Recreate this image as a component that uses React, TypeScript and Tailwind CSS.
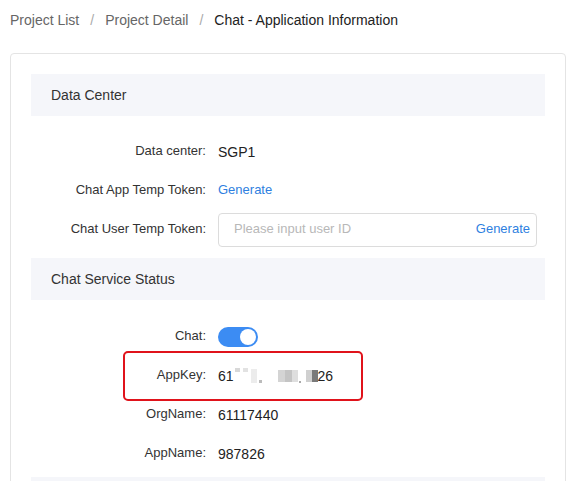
import { useState } from 'react'

const Row = ({ label, children }: { label: string; children: React.ReactNode }) => {
  return (
    <div className="h-[39px] flex items-center">
      <span className="w-[175px] text-right text-[13px] text-[#333]">{label}</span>
      <div className="ml-[12px] flex-1 flex items-center">{children}</div>
    </div>
  )
}

const SectionHeader = ({ title }: { title: string }) => {
  return (
    <div className="h-[42px] bg-[#f5f6fa] pl-5 flex items-center text-[#333]">
      {title}
    </div>
  )
}

const App = () => {
  const [chatOn, setChatOn] = useState(true)
  const [userId, setUserId] = useState('')

  return (
    <div
      className="w-[568px] h-[481px] overflow-hidden bg-white text-sm"
      style={{ fontFamily: '"Liberation Sans", Arial, sans-serif' }}
    >
      <div className="pt-[10px] pl-[10px] h-[30px] flex items-center leading-5">
        <span className="text-[#666]">Project List</span>
        <span className="mx-[11px] text-[#aaa]">/</span>
        <span className="text-[#666]">Project Detail</span>
        <span className="mx-[11px] text-[#aaa]">/</span>
        <span className="text-[#222]">Chat - Application Information</span>
      </div>

      <div className="ml-[10px] mt-[23px] w-[556px] border border-[#e4e4e4] rounded-[4px] pt-5 px-5 pb-10">
        <SectionHeader title="Data Center" />
        <div className="mt-[16px]">
          <Row label="Data center:">
            <span className="text-[#222]">SGP1</span>
          </Row>
          <Row label="Chat App Temp Token:">
            <span className="text-[13px] text-[#2f7fe0] cursor-pointer">Generate</span>
          </Row>
          <Row label="Chat User Temp Token:">
            <div className="w-[319px] h-[34px] border border-[#dcdcdc] rounded-[4px] flex items-center pl-[15px] pr-[6px]">
              <input
                className="flex-1 bg-transparent focus:outline-none text-[13px] placeholder:text-[#b8b8b8]"
                placeholder="Please input user ID"
                value={userId}
                onChange={(e) => setUserId(e.target.value)}
              />
              <span className="text-[13px] text-[#2f7fe0] cursor-pointer">Generate</span>
            </div>
          </Row>
        </div>

        <div className="mt-[9px]">
          <SectionHeader title="Chat Service Status" />
        </div>
        <div className="mt-[17px]">
          <Row label="Chat:">
            <button
              onClick={() => setChatOn(!chatOn)}
              className={`w-10 h-5 rounded-full flex items-center px-[2px] ${
                chatOn ? 'bg-[#3c8cf3] justify-end' : 'bg-[#ccc] justify-start'
              }`}
            >
              <span className="w-4 h-4 rounded-full bg-white" />
            </button>
          </Row>
          <div className="relative">
            <Row label="AppKey:">
              <span className="text-[#222] flex items-center">
                61
                <span className="ml-[1px] w-[5px] h-[4px] bg-[#d8d8d8] self-start mt-[2px]" />
                <span className="ml-[3px] w-[5px] h-[4px] bg-[#e2e2e2] self-start mt-[2px]" />
                <span className="ml-[3px] w-[6px] h-[14px] bg-[#ececec]" />
                <span className="ml-[2px] w-[3px] h-[3px] bg-[#bbb] self-end mb-[3px]" />
                <span className="ml-[16px] w-[7px] h-[12px] bg-[#d4d4d4]" />
                <span className="w-[7px] h-[12px] bg-[#c4c4c4]" />
                <span className="w-[6px] h-[12px] bg-[#dedede]" />
                <span className="ml-[1px] w-[2px] h-[2px] bg-[#aaa] self-end mb-[3px]" />
                <span className="ml-[5px] w-[6px] h-[12px] bg-[#d0d0d0]" />
                <span className="w-[6px] h-[12px] bg-[#7a7a7a]" />
                26
              </span>
            </Row>
            <div className="absolute left-[92px] top-[-5px] w-[240px] h-[50px] border-2 border-[#e0131b] rounded-[5px] pointer-events-none" />
          </div>
          <Row label="OrgName:">
            <span className="text-[#222]">61117440</span>
          </Row>
          <Row label="AppName:">
            <span className="text-[#222]">987826</span>
          </Row>
        </div>
        <div className="mt-[4px]">
          <SectionHeader title="" />
        </div>
      </div>
    </div>
  )
}

export default App
